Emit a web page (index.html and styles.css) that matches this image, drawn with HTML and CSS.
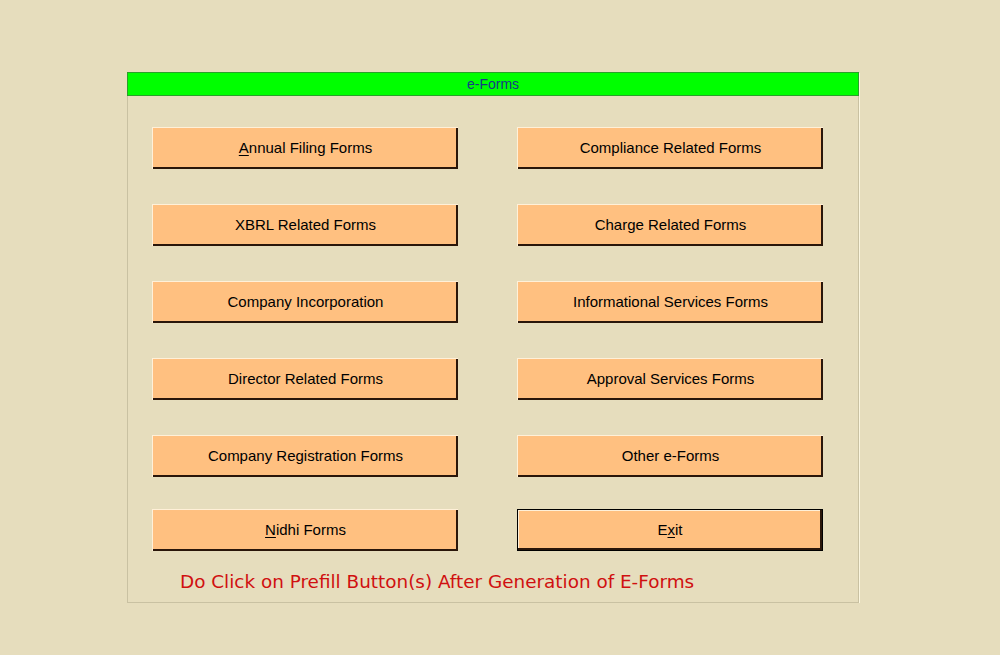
FILE: index.html
```html
<!DOCTYPE html>
<html>
<head>
<meta charset="utf-8">
<link rel="stylesheet" href="styles.css">
</head>
<body>
<div class="panel">
  <div class="title">e-Forms</div>
  <div class="grid">
    <button class="btn"><u>A</u>nnual Filing Forms</button>
    <button class="btn">Compliance Related Forms</button>
    <button class="btn">XBRL Related Forms</button>
    <button class="btn">Charge Related Forms</button>
    <button class="btn">Company Incorporation</button>
    <button class="btn">Informational Services Forms</button>
    <button class="btn">Director Related Forms</button>
    <button class="btn">Approval Services Forms</button>
    <button class="btn">Company Registration Forms</button>
    <button class="btn">Other e-Forms</button>
    <button class="btn last"><u>N</u>idhi Forms</button>
    <button class="btn last default">E<u>x</u>it</button>
  </div>
  <div class="note">Do Click on Prefill Button(s) After Generation of E-Forms</div>
</div>
</body>
</html>
```

FILE: styles.css
```css
html, body {
  margin: 0;
  padding: 0;
  background: #e6ddbd;
  font-family: "Liberation Sans", Arial, sans-serif;
}
.panel {
  margin: 72px 0 0 127px;
  width: 732px;
  height: 531px;
  box-sizing: border-box;
  border-right: 1px solid #c9c1a2;
  border-bottom: 1px solid #c9c1a2;
  border-left: 1px solid #c9c1a2;
  box-shadow: 1px 1px 0 #fbf6e0;
  display: flex;
  flex-direction: column;
}
.title {
  height: 24px;
  box-sizing: border-box;
  margin: 0 -1px;
  background: #00ff00;
  border: 1px solid #2aa02a;
  color: #173a86;
  font-size: 14px;
  line-height: 22px;
  text-align: center;
}
.grid {
  display: grid;
  grid-template-columns: 306px 306px;
  column-gap: 59px;
  row-gap: 35px;
  margin: 31px 0 0 24px;
}
.btn {
  height: 42px;
  box-sizing: border-box;
  background: #ffc080;
  border: none;
  border-top: 1px solid #fff0d8;
  border-left: 1px solid #fff0d8;
  box-shadow: inset -2px -2px 0 #2a160a;
  font-family: "Liberation Sans", Arial, sans-serif;
  font-size: 15px;
  color: #000;
  padding: 0 0 2px 0;
  text-align: center;
}
.btn.last {
  margin-top: -3px;
}
.btn.default {
  border: 1px solid #000;
  box-shadow: inset -2px -2px 0 #2a160a, inset 1px 1px 0 #fff0d8;
}
.btn u {
  text-decoration-thickness: 1px;
  text-underline-offset: 2px;
}
.note {
  margin: 20px 0 0 52px;
  color: #d01010;
  font-family: "DejaVu Sans", Verdana, sans-serif;
  font-size: 18.4px;
}
```
